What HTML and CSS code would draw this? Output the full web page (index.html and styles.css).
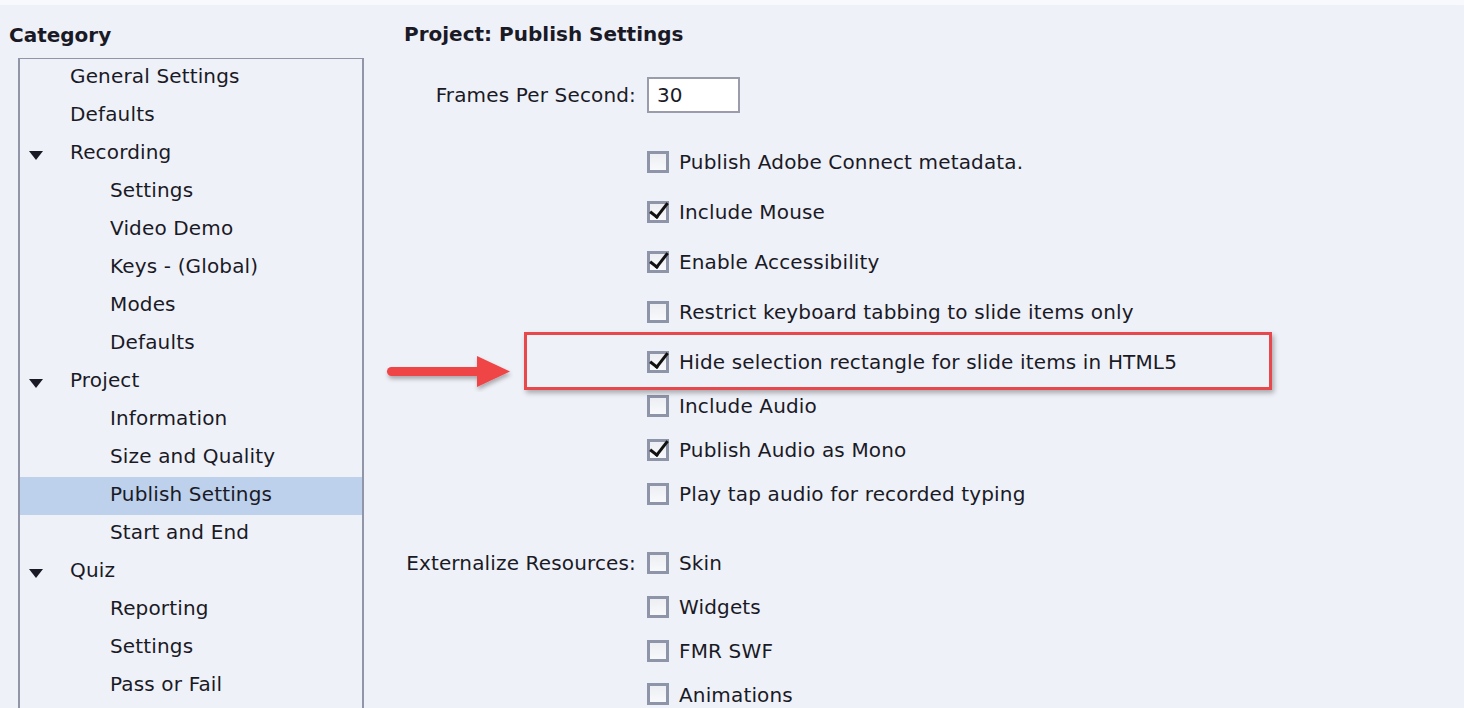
FILE: index.html
```html
<!DOCTYPE html>
<html>
<head>
<meta charset="utf-8">
<link rel="stylesheet" href="styles.css">
</head>
<body>
<div class="page">
  <div class="left">
    <div class="heading">Category</div>
    <div class="tree">
      <div class="row l1">General Settings</div>
      <div class="row l1">Defaults</div>
      <div class="row l1 open"><span class="tri"></span>Recording</div>
      <div class="row l2">Settings</div>
      <div class="row l2">Video Demo</div>
      <div class="row l2">Keys - (Global)</div>
      <div class="row l2">Modes</div>
      <div class="row l2">Defaults</div>
      <div class="row l1 open"><span class="tri"></span>Project</div>
      <div class="row l2">Information</div>
      <div class="row l2">Size and Quality</div>
      <div class="row l2 sel">Publish Settings</div>
      <div class="row l2">Start and End</div>
      <div class="row l1 open"><span class="tri"></span>Quiz</div>
      <div class="row l2">Reporting</div>
      <div class="row l2">Settings</div>
      <div class="row l2">Pass or Fail</div>
    </div>
  </div>
  <div class="right">
    <div class="heading title">Project: Publish Settings</div>
    <div class="field fps">
      <div class="label">Frames Per Second:</div>
      <div class="controls"><div class="input">30</div></div>
    </div>
    <div class="field opts">
      <div class="label"></div>
      <div class="controls">
        <div class="check tall"><span class="box"></span>Publish Adobe Connect metadata.</div>
        <div class="check tall"><span class="box on"></span>Include Mouse</div>
        <div class="check tall"><span class="box on"></span>Enable Accessibility</div>
        <div class="check tall"><span class="box"></span>Restrict keyboard tabbing to slide items only</div>
        <div class="check mid"><span class="box on"></span>Hide selection rectangle for slide items in HTML5</div>
        <div class="check"><span class="box"></span>Include Audio</div>
        <div class="check"><span class="box on"></span>Publish Audio as Mono</div>
        <div class="check"><span class="box"></span>Play tap audio for recorded typing</div>
      </div>
    </div>
    <div class="field ext">
      <div class="label">Externalize Resources:</div>
      <div class="controls">
        <div class="check"><span class="box"></span>Skin</div>
        <div class="check"><span class="box"></span>Widgets</div>
        <div class="check"><span class="box"></span>FMR SWF</div>
        <div class="check last"><span class="box"></span>Animations</div>
      </div>
    </div>
  </div>
  <div class="highlight-box"></div>
  <svg class="arrow" width="130" height="40" viewBox="0 0 130 40">
    <defs>
      <filter id="sh" x="-10%" y="-30%" width="130%" height="180%">
        <feDropShadow dx="1" dy="3" stdDeviation="2" flood-color="#000" flood-opacity="0.3"/>
      </filter>
    </defs>
    <g filter="url(#sh)" fill="#ef4447">
      <rect x="4" y="15" width="94" height="9" rx="4.5"/>
      <polygon points="94,4 127,19.5 94,35"/>
    </g>
  </svg>
</div>
</body>
</html>
```
FILE: styles.css
```css
html, body {
  margin: 0;
  padding: 0;
}
body {
  background: #eff1f8;
  font-family: "DejaVu Sans", "Noto Sans", sans-serif;
  font-size: 20px;
  letter-spacing: 0.15px;
  color: #1a1a26;
  overflow: hidden;
}
.page {
  position: relative;
  display: flex;
  height: 708px;
  border-top: 5px solid #f8f9fc;
  box-sizing: border-box;
  overflow: hidden;
}
.heading {
  font-weight: bold;
  height: 28px;
  line-height: 28px;
  letter-spacing: 0;
}
.left {
  width: 380px;
  padding-left: 9px;
  box-sizing: border-box;
  display: flex;
  flex-direction: column;
}
.left .heading {
  margin-top: 16px;
}
.tree {
  margin-top: 9px;
  margin-left: 9px;
  width: 346px;
  border: 1px solid #9096a8;
  border-width: 1px 2px 0 2px;
  box-sizing: border-box;
  flex: 1;
  overflow: hidden;
}
.row {
  height: 38px;
  line-height: 35px;
  position: relative;
  white-space: nowrap;
}
.row.l1 { padding-left: 50px; }
.row.l2 { padding-left: 90px; }
.row.sel { background: #bdd0ec; }
.tri {
  position: absolute;
  left: 9px;
  top: 16px;
  width: 0;
  height: 0;
  border-left: 7px solid transparent;
  border-right: 7px solid transparent;
  border-top: 9px solid #1a1a26;
}
.right {
  flex: 1;
  padding-left: 24px;
}
.title {
  margin-top: 15px;
}
.field {
  display: flex;
}
.label {
  width: 232px;
  text-align: right;
  flex: none;
  white-space: nowrap;
}
.controls {
  margin-left: 11px;
  display: flex;
  flex-direction: column;
}
.fps {
  margin-top: 29px;
  align-items: center;
}
.input {
  width: 93px;
  height: 36px;
  box-sizing: border-box;
  border: 2px solid #9a9cab;
  background: #fff;
  line-height: 32px;
  padding-left: 8px;
}
.opts {
  margin-top: 24px;
}
.ext {
  margin-top: 25px;
}
.ext .label {
  line-height: 44px;
}
.check {
  height: 44px;
  display: flex;
  align-items: center;
  white-space: nowrap;
}
.check.last { height: 40px; align-items: flex-start; padding-top: 10px; box-sizing: border-box; }
.check.tall { height: 50px; }
.check.mid { height: 47px; padding-top: 3px; box-sizing: border-box; }
.box {
  width: 22px;
  height: 22px;
  box-sizing: border-box;
  border: 3px solid #8f95a8;
  background: linear-gradient(#eceef3, #f8f9fb);
  margin-right: 10px;
  flex: none;
  position: relative;
}
.box.on::after {
  content: "";
  position: absolute;
  left: 4px;
  top: -5px;
  width: 7px;
  height: 16px;
  border-right: 3.5px solid #111;
  border-bottom: 3.5px solid #111;
  transform: rotate(38deg);
}
.highlight-box {
  position: absolute;
  left: 524px;
  top: 327px;
  width: 748px;
  height: 58px;
  border: 3px solid #e8474b;
  box-sizing: border-box;
  box-shadow: 2px 3px 5px rgba(0, 0, 0, 0.3);
}
.arrow {
  position: absolute;
  left: 383px;
  top: 347px;
}
```
